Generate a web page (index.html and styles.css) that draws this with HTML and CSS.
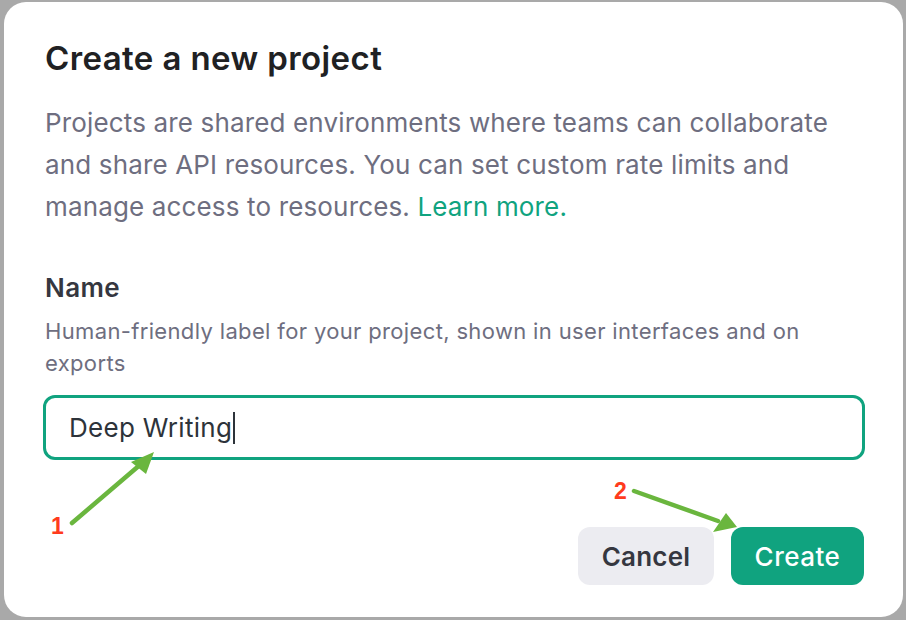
FILE: index.html
```html
<!DOCTYPE html>
<html lang="en">
<head>
<meta charset="utf-8">
<title>Create a new project</title>
<link rel="stylesheet" href="styles.css">
</head>
<body>
<div class="modal">
  <h1 class="title">Create a new project</h1>
  <p class="desc">Projects are shared environments where teams can collaborate and share API resources. You can set custom rate limits and manage access to resources. <a class="link" href="#">Learn more.</a></p>
  <div class="field">
    <div class="label">Name</div>
    <div class="hint">Human-friendly label for your project, shown in user interfaces and on exports</div>
    <div class="input"><span class="value">Deep Writing</span><span class="caret"></span></div>
  </div>
  <div class="actions">
    <button class="btn btn-cancel">Cancel</button>
    <button class="btn btn-create">Create</button>
  </div>
  <span class="marker marker-1">1</span>
  <span class="marker marker-2">2</span>
  <svg class="arrows" width="906" height="620" viewBox="0 0 906 620" aria-hidden="true">
    <g stroke="#6ab63e" stroke-width="4.5" stroke-linecap="round" fill="none">
      <line x1="72" y1="523" x2="141" y2="464"/>
      <line x1="634" y1="491" x2="718" y2="521"/>
    </g>
    <g fill="#6ab63e">
      <polygon points="154,452 131,462 146,474"/>
      <polygon points="737,527 726,513 713,532"/>
    </g>
  </svg>
</div>
</body>
</html>
```
FILE: styles.css
```css
* { box-sizing: border-box; }
html, body { margin: 0; height: 100%; }
body {
  background: #a9a9a9;
  padding: 2px 3px 3px 4px;
  font-family: Inter, "Noto Sans", sans-serif;
}
.modal {
  position: relative;
  background: #ffffff;
  border-radius: 22px;
  height: 615px;
  padding: 36px 38px 0 39px;
  display: flex;
  flex-direction: column;
}
.title {
  margin: 0 0 0 2px;
  font-size: 33px;
  line-height: 40px;
  font-weight: 600;
  color: #202123;
  letter-spacing: 0.4px;
}
.desc {
  margin: 24px 0 0 2px;
  font-size: 26px;
  line-height: 42px;
  color: #6e6e80;
  letter-spacing: 0.15px;
}
.link { color: #10a37f; text-decoration: none; }
.field { margin-top: 43px; }
.label {
  margin-left: 2px;
  font-size: 26px;
  line-height: 34px;
  font-weight: 600;
  color: #353740;
  letter-spacing: 0.4px;
}
.hint {
  margin: 10px 0 0 2px;
  font-size: 22px;
  line-height: 32px;
  color: #6e6e80;
  letter-spacing: 0.35px;
}
.input {
  margin-top: 16px;
  height: 65px;
  border: 3px solid #10a37f;
  border-radius: 12px;
  display: flex;
  align-items: center;
  padding-left: 23px;
}
.value {
  font-size: 26px;
  color: #2d333a;
  letter-spacing: 0.3px;
}
.caret {
  width: 2px;
  height: 32px;
  background: #2d333a;
  margin-left: 1px;
}
.actions {
  margin-top: 67px;
  display: flex;
  justify-content: flex-end;
  gap: 17px;
  padding-right: 1px;
}
.btn {
  height: 58px;
  border: none;
  border-radius: 12px;
  font-family: inherit;
  font-size: 26px;
  font-weight: 600;
  padding: 0;
}
.btn-cancel { background: #ececf1; color: #353740; width: 136px; letter-spacing: 0.2px; }
.btn-create { background: #10a37f; color: #ffffff; width: 133px; font-weight: 500; letter-spacing: 0.5px; }
.marker {
  position: absolute;
  font-family: "Liberation Sans", Arial, sans-serif;
  font-weight: 700;
  font-size: 23px;
  color: #ff3b1d;
  line-height: 1;
}
.marker-1 { left: 47px; top: 513px; }
.marker-2 { left: 610px; top: 478px; }
.arrows {
  position: absolute;
  left: -4px;
  top: -2px;
  pointer-events: none;
}
```
